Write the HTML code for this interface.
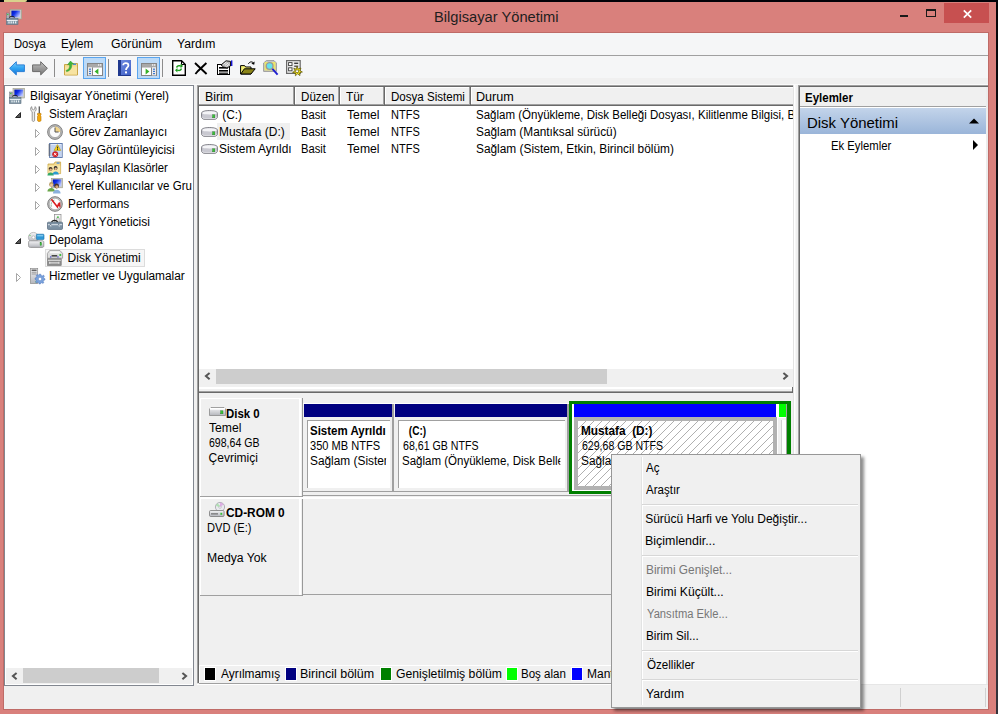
<!DOCTYPE html><html><head>
<meta charset="utf-8">
<title>Bilgisayar Yönetimi</title>
<style>
html,body{margin:0;padding:0;}
body{width:998px;height:714px;overflow:hidden;position:relative;background:linear-gradient(#050508,#34343c);font-family:"Liberation Sans",sans-serif;font-size:12px;color:#000;}
.a{position:absolute;}
.t{position:absolute;white-space:pre;line-height:16px;height:16px;font-size:12px;}
.b{font-weight:bold;}
svg{position:absolute;overflow:visible;}
</style>
</head>
<body>
<!-- desktop remnants -->
<div class="a" style="left:0;top:0;width:998px;height:2px;background:#020208;"></div>
<div class="a" style="left:4px;top:0;width:23px;height:2px;background:#d9d28c;border-radius:0 0 8px 0;"></div>
<!-- window frame -->
<div class="a" id="frame" style="left:0;top:2px;width:995.5px;height:712px;background:#d9807c;"></div>
<div class="a" style="left:3px;top:32px;width:986px;height:678px;background:#bf6b67;"></div>
<!-- title -->
<div class="t" style="left: 433.71px; top: 7.2px; font-size: 14.9px; line-height: 20px; height: 20px; color: rgb(30, 30, 30); transform: scaleX(0.9856); transform-origin: 0px 0px;">Bilgisayar Yönetimi</div>
<!-- title icon -->
<svg style="left:6px;top:9px;" width="16" height="16" viewBox="0 0 16 16"><rect x="4" y="0.4" width="11.6" height="9.6" fill="#cfcfc0" stroke="#9a9a8a" stroke-width="0.6"></rect><rect x="5.4" y="1.6" width="8.8" height="6.8" fill="url(#gscr)"></rect><rect x="7.6" y="10" width="4.4" height="1.4" fill="#8a8a8a"></rect><rect x="0.6" y="4" width="2.6" height="6" fill="#a9b0b6" stroke="#6d747a" stroke-width="0.5"></rect><rect x="1.2" y="5" width="1.2" height="1" fill="#2ed02e"></rect><path d="M3.4 8.6 C4.4 6.8 7.6 6.8 8.6 8.6" fill="none" stroke="#222" stroke-width="1.1"></path><rect x="0.4" y="9.4" width="11.6" height="6.2" fill="#8197a6" stroke="#5d7080" stroke-width="0.6"></rect><rect x="0.8" y="11" width="10.8" height="1" fill="#e8eef2"></rect><rect x="2.4" y="12.4" width="1.2" height="2" fill="#e8eef2"></rect><rect x="4.6" y="12.4" width="1.2" height="2" fill="#e8eef2"></rect><rect x="6.8" y="12.4" width="1.2" height="2" fill="#e8eef2"></rect><rect x="9" y="12.4" width="1.2" height="2" fill="#e8eef2"></rect></svg>
<!-- caption buttons -->
<div class="a" style="left:900px;top:15px;width:8px;height:2px;background:#1a1a1a;"></div>
<div class="a" style="left:926px;top:9px;width:8px;height:5px;border:1px solid #1a1a1a;border-top-width:2px;"></div>
<div class="a" style="left:944px;top:3px;width:45px;height:20px;background:#c75050;"></div>
<svg style="left:962.5px;top:9.5px;" width="9" height="8" viewBox="0 0 9 8"><path d="M0.8 0.3 L8.2 7.7 M8.2 0.3 L0.8 7.7" stroke="#fff" stroke-width="1.7" fill="none"></path></svg>

<!-- client -->
<div class="a" id="client" style="left:4px;top:33px;width:984px;height:676px;background:#f0f0f0;"></div>
<!-- menu bar -->
<div class="a" style="left:4px;top:33px;width:984px;height:22px;background:#f5f6f7;"></div>
<div class="a" style="left:4px;top:55px;width:984px;height:1px;background:#a0a0a0;"></div>
<div class="t" style="left: 13.67px; top: 35.5px; transform: scaleX(0.9333); transform-origin: 0px 0px;">Dosya</div>
<div class="t" style="left: 61.43px; top: 35.5px; transform: scaleX(0.9656); transform-origin: 0px 0px;">Eylem</div>
<div class="t" style="left: 110.5px; top: 35.5px; transform: scaleX(1.0204); transform-origin: 0px 0px;">Görünüm</div>
<div class="t" style="left: 177px; top: 35.5px; transform: scaleX(1.0135); transform-origin: 0px 0px;">Yardım</div>
<!-- toolbar -->
<div class="a" style="left:4px;top:56px;width:984px;height:22px;background:#f5f6f7;"></div>

<!-- TOOLBAR CONTENT -->
<svg style="left:9px;top:61px;" width="16" height="15" viewBox="0 0 16 15"><defs><linearGradient id="gb" x1="0" y1="0" x2="0" y2="1"><stop offset="0" stop-color="#7fd0fb"></stop><stop offset="0.5" stop-color="#2fa3f2"></stop><stop offset="1" stop-color="#1673d6"></stop></linearGradient><linearGradient id="gg" x1="0" y1="0" x2="0" y2="1"><stop offset="0" stop-color="#c4c4c4"></stop><stop offset="0.5" stop-color="#9a9a9a"></stop><stop offset="1" stop-color="#7a7a7a"></stop></linearGradient></defs><path d="M0.6 7.3 L7.3 0.7 L7.3 3.9 L15.4 3.9 L15.4 10.6 L7.3 10.6 L7.3 13.9 Z" fill="url(#gb)" stroke="#2b7fd6" stroke-width="1" stroke-linejoin="round"></path></svg>
<svg style="left:32px;top:61px;" width="16" height="15" viewBox="0 0 16 15"><path d="M15.4 7.3 L8.7 0.7 L8.7 3.9 L0.6 3.9 L0.6 10.6 L8.7 10.6 L8.7 13.9 Z" fill="url(#gg)" stroke="#6b6b6b" stroke-width="1" stroke-linejoin="round"></path></svg>
<div class="a" style="left:54px;top:59px;width:1px;height:18px;background:#8c8c8c;"></div>
<!-- folder up -->
<svg style="left:64px;top:61px;" width="15" height="15" viewBox="0 0 15 15"><path d="M0.5 3.5 L5 3.5 L6 2.5 L13.5 2.5 L13.5 14 L0.5 14 Z" fill="#f3d98a" stroke="#c9a648" stroke-width="1"></path><rect x="1" y="5.5" width="12" height="8" fill="#f7e3a2"></rect><rect x="9" y="2.6" width="3" height="1.4" fill="#4a8fe0"></rect><path d="M2 9.5 C5 9 6 6 5.5 3.5 L3.5 3.8 L6.5 0 L9.5 3 L7.6 3.3 C8.2 7 6 10 2.6 10.6 Z" fill="#3fb53a" stroke="#2f9a2c" stroke-width="0.5"></path></svg>
<!-- toggled button 1 -->
<div class="a" style="left:83px;top:57px;width:21px;height:20px;background:#bcdaf7;border:1px solid #5aa5ee;"></div>
<svg style="left:87px;top:63px;" width="16" height="13" viewBox="0 0 16 13"><rect x="0.5" y="0.5" width="15" height="12" fill="#fff" stroke="#858585"></rect><rect x="1" y="1" width="14" height="2.4" fill="#a9a9a9"></rect><rect x="11" y="1.3" width="1.3" height="1.3" fill="#fff"></rect><rect x="13" y="1.3" width="1.3" height="1.3" fill="#fff"></rect><rect x="1" y="3.4" width="14" height="1" fill="#858585"></rect><rect x="1" y="4.4" width="4" height="8" fill="#ececec"></rect><rect x="5" y="4.4" width="1" height="8" fill="#858585"></rect><rect x="2" y="5.6" width="2" height="1.2" fill="#3a78d0"></rect><rect x="2" y="7.8" width="2" height="1.2" fill="#3a78d0"></rect><rect x="2" y="10" width="2" height="1.2" fill="#3a78d0"></rect><path d="M7.6 8.4 L11.4 5.4 L11.4 11.4 Z" fill="#35b027"></path></svg>
<div class="a" style="left:108px;top:59px;width:1px;height:18px;background:#8c8c8c;"></div>
<!-- help -->
<svg style="left:118px;top:60px;" width="13" height="16" viewBox="0 0 13 16"><defs><linearGradient id="gh" x1="0" y1="0" x2="1" y2="1"><stop offset="0" stop-color="#7590e4"></stop><stop offset="1" stop-color="#3a5cc4"></stop></linearGradient></defs><rect width="13" height="16" fill="url(#gh)"></rect><rect width="3" height="16" fill="#20398f"></rect><rect x="0" y="15" width="13" height="1" fill="#20398f"></rect><path d="M5.2 5.2 C5.2 2.4 10.4 2.4 10.4 5.4 C10.4 7.4 8 7.6 8 10" fill="none" stroke="#fff" stroke-width="1.8"></path><rect x="7" y="11.4" width="2" height="2" fill="#fff"></rect></svg>
<!-- toggled button 2 -->
<div class="a" style="left:137px;top:57px;width:21px;height:20px;background:#bcdaf7;border:1px solid #5aa5ee;"></div>
<svg style="left:141px;top:63px;" width="16" height="13" viewBox="0 0 16 13"><rect x="0.5" y="0.5" width="15" height="12" fill="#fff" stroke="#858585"></rect><rect x="1" y="1" width="14" height="2.4" fill="#a9a9a9"></rect><rect x="11" y="1.3" width="1.3" height="1.3" fill="#fff"></rect><rect x="13" y="1.3" width="1.3" height="1.3" fill="#fff"></rect><rect x="1" y="3.4" width="14" height="1" fill="#858585"></rect><rect x="11" y="4.4" width="4" height="8" fill="#ececec"></rect><rect x="10" y="4.4" width="1" height="8" fill="#858585"></rect><rect x="12" y="5.6" width="2" height="1.2" fill="#3a78d0"></rect><rect x="12" y="7.8" width="2" height="1.2" fill="#3a78d0"></rect><rect x="12" y="10" width="2" height="1.2" fill="#3a78d0"></rect><path d="M8.4 8.4 L4.6 5.4 L4.6 11.4 Z" fill="#35b027"></path></svg>
<div class="a" style="left:162px;top:59px;width:1px;height:18px;background:#8c8c8c;"></div>
<!-- refresh -->
<svg style="left:172px;top:60px;" width="14" height="16" viewBox="0 0 14 16"><path d="M0.7 0.7 L9.5 0.7 L13.3 4.5 L13.3 15.3 L0.7 15.3 Z" fill="#fff" stroke="#000" stroke-width="1.4"></path><path d="M9.5 0.7 L9.5 4.5 L13.3 4.5" fill="none" stroke="#000" stroke-width="1"></path><path d="M4 7.5 C4 5 7 4.4 8.6 5.4 L8.6 3.6 L11 6 L8.6 8.2 L8.6 6.8 C7.4 6.2 5.6 6.6 5.4 7.8 Z" fill="#1da01d"></path><path d="M10 8.6 C10 11 7 11.8 5.4 10.8 L5.4 12.6 L3 10.2 L5.4 8 L5.4 9.4 C6.6 10 8.4 9.6 8.6 8.4 Z" fill="#1da01d"></path></svg>
<!-- delete X -->
<svg style="left:194px;top:62px;" width="14" height="13" viewBox="0 0 14 13"><path d="M1 1 L12.6 12 M12.4 1 L4 9 L1.4 12" stroke="#000" stroke-width="1.9" fill="none"></path></svg>
<!-- properties -->
<svg style="left:217px;top:60px;" width="16" height="15" viewBox="0 0 16 15"><rect x="0.5" y="4.5" width="12" height="10" fill="#fff" stroke="#000"></rect><rect x="2" y="7" width="9" height="1.6" fill="#000"></rect><rect x="2" y="10" width="9" height="1.6" fill="#000"></rect><rect x="2" y="12.6" width="9" height="1.2" fill="#000"></rect><path d="M4 5 L9 0.8 L13.5 1.4 L13.5 6 L10 8 L6.5 7 Z" fill="#b9b9b9" stroke="#000" stroke-width="0.9"></path><path d="M6.5 4.4 L9.4 2 M8 5.4 L11 3 M9.6 6.4 L12.4 4" stroke="#fff" stroke-width="0.8"></path><rect x="14" y="0.4" width="1.4" height="5.6" fill="#1515d8"></rect></svg>
<!-- open folder -->
<svg style="left:240px;top:60px;" width="16" height="15" viewBox="0 0 16 15"><path d="M0.6 5.6 L0.6 14 L11 14 L11 7 L5.6 7 L4.6 5.6 Z" fill="#f3ef73" stroke="#000" stroke-width="1"></path><path d="M0.8 14 L4.4 8.8 L15.2 8.8 L11 14 Z" fill="#8a8418" stroke="#000" stroke-width="1"></path><path d="M8.4 3.8 C9.8 1.4 12.4 1.2 13.6 3.4" fill="none" stroke="#000" stroke-width="1"></path><path d="M14.6 1.6 L14.2 4.8 L11.4 3.8 Z" fill="#000"></path></svg>
<!-- magnifier -->
<svg style="left:263px;top:60px;" width="16" height="16" viewBox="0 0 16 16"><path d="M0.6 3 L3.4 0.6 L11 0.6 L13.4 3 L13.4 11.4 L0.6 11.4 Z" fill="#c9c9c9" stroke="#8d8d8d" stroke-width="0.8"></path><rect x="1.6" y="2" width="10.8" height="8.4" fill="#ece667"></rect><circle cx="6.6" cy="6" r="3.4" fill="#63e3ee" stroke="#9a9a9a" stroke-width="1.3"></circle><path d="M9.4 8.8 L14.6 14.6" stroke="#1f1fd0" stroke-width="1.9"></path></svg>
<!-- settings grid -->
<svg style="left:286px;top:60px;" width="17" height="16" viewBox="0 0 17 16"><rect x="0.6" y="0.6" width="13.6" height="12.8" fill="#ececec" stroke="#6a6a6a" stroke-width="1.2"></rect><rect x="2.6" y="2.6" width="3.4" height="3" fill="#fff" stroke="#3c3c3c" stroke-width="0.9"></rect><rect x="8.2" y="2.6" width="4" height="1.4" fill="#3c3c3c"></rect><rect x="2.6" y="7.8" width="3.4" height="3" fill="#fff" stroke="#3c3c3c" stroke-width="0.9"></rect><rect x="8.2" y="5.6" width="4" height="1.2" fill="#3c3c3c"></rect><path d="M11 6.4 L12.2 9 L15 8 L13.8 10.6 L16.4 12 L13.6 12.8 L14 15.6 L11.6 13.8 L9.4 15.8 L9.4 13 L6.6 12.4 L9 10.8 L7.8 8.2 L10.2 9.2 Z" fill="#f5e61e" stroke="#5a5200" stroke-width="0.7"></path><rect x="9.8" y="10" width="2.6" height="2.4" fill="#fff" stroke="#5a5200" stroke-width="0.6"></rect></svg>
<!-- /TOOLBAR CONTENT -->


<div class="a" style="left:4px;top:84px;width:984px;height:1px;background:#fafafa;"></div>
<!-- tree panel -->
<div class="a" id="tree" style="left:4px;top:85px;width:188px;height:599px;background:#fff;border:1px solid #828790;"></div>


<!-- TREE CONTENT -->
<div class="a" style="left:45px;top:249px;width:100px;height:18px;background:#f6f6f6;border:1px solid #dcdcdc;box-sizing:border-box;"></div>
<div class="t" style="left: 29.51px; top: 87.7px; transform: scaleX(0.992); transform-origin: 0px 0px;">Bilgisayar Yönetimi (Yerel)</div>
<div class="t" style="left: 48.63px; top: 105.7px; transform: scaleX(0.9747); transform-origin: 0px 0px;">Sistem Araçları</div>
<div class="t" style="left: 68.6px; top: 123.7px; transform: scaleX(0.968); transform-origin: 0px 0px;">Görev Zamanlayıcı</div>
<div class="t" style="left: 68.6px; top: 141.7px; transform: scaleX(0.9906); transform-origin: 0px 0px;">Olay Görüntüleyicisi</div>
<div class="t" style="left: 68.16px; top: 159.7px; transform: scaleX(0.9419); transform-origin: 0px 0px;">Paylaşılan Klasörler</div>
<div class="t" style="left: 68px; top: 177.7px; width: 129.05px; overflow: hidden; transform: scaleX(0.9609); transform-origin: 0px 0px;">Yerel Kullanıcılar ve Gruplar</div>
<div class="t" style="left: 67.61px; top: 195.7px; transform: scaleX(0.9869); transform-origin: 0px 0px;">Performans</div>
<div class="t" style="left: 68.3px; top: 213.7px; transform: scaleX(1.0049); transform-origin: 0px 0px;">Aygıt Yöneticisi</div>
<div class="t" style="left: 48.62px; top: 231.7px; transform: scaleX(0.9833); transform-origin: 0px 0px;">Depolama</div>
<div class="t" style="left: 67.6px; top: 249.7px;">Disk Yönetimi</div>
<div class="t" style="left: 48.61px; top: 267.7px; transform: scaleX(0.9883); transform-origin: 0px 0px;">Hizmetler ve Uygulamalar</div>
<!-- tree icons -->
<svg width="0" height="0" style="left:0;top:0;"><defs><linearGradient id="gscr" x1="0" y1="0" x2="1" y2="0.6"><stop offset="0" stop-color="#0010b0"></stop><stop offset="0.45" stop-color="#1030e8"></stop><stop offset="1" stop-color="#b8c4ff"></stop></linearGradient><linearGradient id="gsil" x1="0" y1="0" x2="0" y2="1"><stop offset="0" stop-color="#f4f4f6"></stop><stop offset="1" stop-color="#b4b6bc"></stop></linearGradient></defs></svg><svg style="left:9px;top:88px;" width="16" height="16" viewBox="0 0 16 16"><rect x="4" y="0.4" width="11.6" height="9.6" fill="#cfcfc0" stroke="#9a9a8a" stroke-width="0.6"></rect><rect x="5.4" y="1.6" width="8.8" height="6.8" fill="url(#gscr)"></rect><rect x="7.6" y="10" width="4.4" height="1.4" fill="#8a8a8a"></rect><rect x="0.6" y="4" width="2.6" height="6" fill="#a9b0b6" stroke="#6d747a" stroke-width="0.5"></rect><rect x="1.2" y="5" width="1.2" height="1" fill="#2ed02e"></rect><path d="M3.4 8.6 C4.4 6.8 7.6 6.8 8.6 8.6" fill="none" stroke="#222" stroke-width="1.1"></path><rect x="0.4" y="9.4" width="11.6" height="6.2" fill="#8197a6" stroke="#5d7080" stroke-width="0.6"></rect><rect x="0.8" y="11" width="10.8" height="1" fill="#e8eef2"></rect><rect x="2.4" y="12.4" width="1.2" height="2" fill="#e8eef2"></rect><rect x="4.6" y="12.4" width="1.2" height="2" fill="#e8eef2"></rect><rect x="6.8" y="12.4" width="1.2" height="2" fill="#e8eef2"></rect><rect x="9" y="12.4" width="1.2" height="2" fill="#e8eef2"></rect></svg><svg style="left:30px;top:106px;" width="12" height="16" viewBox="0 0 12 16"><path d="M1.6 0.6 C0 2.2 0.4 4.8 2.2 5.8 L2.2 14.4 C2.2 15.7 4.6 15.7 4.6 14.4 L4.6 5.8 C6.4 4.8 6.8 2.2 5.2 0.6 L4.6 3.2 L3.4 3.8 L2.2 3.2 Z" fill="#ececec" stroke="#808080" stroke-width="0.8"></path><rect x="8.7" y="0.4" width="1.1" height="7.2" fill="#3a3a3a"></rect><path d="M7.5 7.4 L11 7.4 L11 9 L10.4 9.6 L11 10.2 L11 14.4 C11 15.8 7.5 15.8 7.5 14.4 L7.5 10.2 L8.1 9.6 L7.5 9 Z" fill="#f5a90e" stroke="#b87400" stroke-width="0.6"></path></svg><svg style="left:47px;top:124px;" width="16" height="16" viewBox="0 0 16 16"><circle cx="8" cy="8" r="7.4" fill="#b9b9b9" stroke="#7a7a7a" stroke-width="0.9"></circle><circle cx="8" cy="8" r="5.6" fill="#fbfbfb" stroke="#8c8c8c" stroke-width="0.6"></circle><path d="M8 8 L8 2.6 A5.4 5.4 0 0 1 13.4 8 Z" fill="#f1d48a"></path><path d="M8 3.6 L8 8 L11.6 8" fill="none" stroke="#555" stroke-width="1"></path></svg><svg style="left:48px;top:143px;" width="15" height="15" viewBox="0 0 15 15"><rect x="1.6" y="0.5" width="12.6" height="14" fill="#e4ecfa" stroke="#5572a8" stroke-width="0.9"></rect><path d="M3 3 H13 M3 5 H13 M3 7 H13 M3 9 H13 M3 11 H13 M3 13 H13" stroke="#8fb0e4" stroke-width="0.8"></path><path d="M0.4 2 H2.6 M0.4 4 H2.6 M0.4 6 H2.6 M0.4 8 H2.6 M0.4 10 H2.6 M0.4 12 H2.6" stroke="#555" stroke-width="0.9"></path><path d="M9.4 1.6 L12.8 7.4 L6 7.4 Z" fill="#f7d21e" stroke="#a88a00" stroke-width="0.5"></path><rect x="9" y="3.6" width="0.9" height="2" fill="#222"></rect><rect x="9" y="6" width="0.9" height="0.8" fill="#222"></rect><circle cx="7.2" cy="11.2" r="2.7" fill="#e0262c" stroke="#a01016" stroke-width="0.5"></circle><path d="M6 10 L8.4 12.4 M8.4 10 L6 12.4" stroke="#fff" stroke-width="0.9"></path></svg><svg style="left:47px;top:161px;" width="16" height="15" viewBox="0 0 16 15"><path d="M1 3 L7 3 L8 1 L13.6 1 L13.6 12.6 L1 12.6 Z" fill="#f2d98c" stroke="#c9a648" stroke-width="0.8"></path><rect x="1.4" y="4.6" width="11.8" height="7.6" fill="#f8e6a8"></rect><rect x="9.6" y="1.4" width="3" height="1.3" fill="#4a8fe0"></rect><circle cx="3.6" cy="7.8" r="1.9" fill="#3a2c20"></circle><path d="M0.4 14.4 C0.4 10.4 6.8 10.4 6.8 14.4 Z" fill="#35a86a"></path><circle cx="3.7" cy="8.6" r="1.2" fill="#e9b98a"></circle><circle cx="8.6" cy="7" r="1.9" fill="#2a2a2a"></circle><path d="M5.6 13.6 C5.6 9.6 11.8 9.6 11.8 13.6 Z" fill="#2a9ad0"></path><circle cx="8.7" cy="7.8" r="1.2" fill="#e9b98a"></circle></svg><svg style="left:47px;top:178px;" width="16" height="16" viewBox="0 0 16 16"><rect x="4.6" y="0.4" width="11" height="9.4" fill="#cfcfc0" stroke="#9a9a8a" stroke-width="0.6"></rect><rect x="5.8" y="1.4" width="8.6" height="7" fill="url(#gscr)"></rect><circle cx="4.4" cy="6.4" r="2.3" fill="#b79a62"></circle><circle cx="4.5" cy="7" r="1.5" fill="#ecc79c"></circle><path d="M0.4 13.6 C0.4 8.8 8 8.8 8 13.6 Z" fill="#6aa64a"></path><circle cx="9.6" cy="8" r="2.4" fill="#4a3626"></circle><circle cx="9.8" cy="8.8" r="1.5" fill="#d8a67a"></circle><path d="M6 15.6 C6 10.6 13.6 10.6 13.6 15.6 Z" fill="#8ab0dc"></path></svg><svg style="left:47px;top:196px;" width="16" height="16" viewBox="0 0 16 16"><circle cx="8" cy="8" r="7.3" fill="#c4c4c4" stroke="#6e6e6e" stroke-width="0.9"></circle><circle cx="8" cy="8" r="5.7" fill="#fff" stroke="#8c8c8c" stroke-width="0.5"></circle><path d="M4.4 10.4 C3.4 7 5.6 4.2 8 4" fill="none" stroke="#3a8a5a" stroke-width="0.9" stroke-dasharray="1 1"></path><path d="M4.4 3.2 L10.4 11 L11.4 8.4 L12.6 9.6 L12.4 6.4" fill="none" stroke="#d81e1e" stroke-width="1.6" stroke-linejoin="miter"></path></svg><svg style="left:47px;top:214px;" width="16" height="16" viewBox="0 0 16 16"><rect x="7.4" y="0.5" width="6.6" height="7.6" fill="#f4f4f4" stroke="#8a8a8a" stroke-width="0.7"></rect><rect x="10" y="2.4" width="1.8" height="1.6" fill="#4cc24c"></rect><rect x="9.4" y="4" width="3" height="4" fill="#e0e0e0" stroke="#9a9a9a" stroke-width="0.4"></rect><path d="M4.6 8.4 C5 5.6 10.2 5.6 10.6 8.4" fill="none" stroke="#222" stroke-width="1.2"></path><rect x="0.5" y="8.2" width="15" height="7.2" rx="0.8" fill="#7d92a4" stroke="#52667a" stroke-width="0.7"></rect><rect x="0.9" y="10.2" width="14.2" height="1" fill="#dfe7ee"></rect><rect x="3" y="10" width="1.4" height="2.6" fill="#e8eef2" stroke="#52667a" stroke-width="0.3"></rect><rect x="11.4" y="10" width="1.4" height="2.6" fill="#e8eef2" stroke="#52667a" stroke-width="0.3"></rect></svg><svg style="left:28px;top:232px;" width="17" height="16" viewBox="0 0 17 16"><circle cx="5.4" cy="5.4" r="5" fill="url(#gsil)" stroke="#9a9a9a" stroke-width="0.6"></circle><circle cx="5.4" cy="5.4" r="1.5" fill="#fff" stroke="#9a9a9a" stroke-width="0.5"></circle><circle cx="2" cy="3.4" r="0.7" fill="#6cd06c"></circle><rect x="8.4" y="2.2" width="7.6" height="5.4" rx="0.8" fill="#2f98d6" stroke="#1a6fa8" stroke-width="0.6"></rect><rect x="9.2" y="3" width="6" height="1.4" fill="#7cc6ee"></rect><path d="M0.6 10.2 C0.6 9 1.4 8.8 2.4 8.8 L14 8.8 C15.2 8.8 15.8 9.2 15.8 10.2 L15.8 13.8 C15.8 15 15.2 15.4 14 15.4 L2.4 15.4 C1.2 15.4 0.6 15 0.6 13.8 Z" fill="url(#gsil)" stroke="#808080" stroke-width="0.7"></path><rect x="12" y="10.4" width="1.6" height="3" fill="#3fbf3f" stroke="#2a7a2a" stroke-width="0.3"></rect></svg><svg style="left:47px;top:250px;" width="16" height="16" viewBox="0 0 16 16"><path d="M2.6 0.6 L13 0.6 L15.6 3.4 L15.6 8.2 L0.4 8.2 L0.4 3.4 Z" fill="#dedede" stroke="#8a8a8a" stroke-width="0.7"></path><rect x="2.8" y="1.3" width="10" height="2" fill="#f8f8f8"></rect><rect x="12.4" y="4" width="1.8" height="2" fill="#3fbf3f"></rect><rect x="4.6" y="5.2" width="5.6" height="1.3" fill="#222"></rect><rect x="3.2" y="6.4" width="1.1" height="1.1" fill="#1a1ad0"></rect><rect x="10.4" y="6.4" width="1.1" height="1.1" fill="#1a1ad0"></rect><rect x="0.6" y="8.8" width="13.6" height="6.6" fill="#8c8c8c" stroke="#6a6a6a" stroke-width="0.6"></rect><rect x="1" y="9.8" width="12.8" height="0.9" fill="#f0f0f0"></rect><rect x="3" y="12.4" width="8.6" height="1" fill="#f0f0f0"></rect><rect x="2.2" y="11.8" width="1" height="2" fill="#f0f0f0"></rect><rect x="11.4" y="11.8" width="1" height="2" fill="#f0f0f0"></rect></svg><svg style="left:30px;top:268px;" width="15" height="16" viewBox="0 0 15 16"><rect x="0.5" y="0.5" width="7.2" height="15" fill="url(#gsil)" stroke="#8a8a8a" stroke-width="0.7"></rect><rect x="1.6" y="1.6" width="5" height="1.2" fill="#444"></rect><rect x="1.6" y="3.8" width="5" height="0.8" fill="#8a8a8a"></rect><rect x="1.6" y="5.6" width="5" height="0.8" fill="#8a8a8a"></rect><rect x="5.4" y="13.4" width="1.4" height="1" fill="#3fbf3f"></rect><g transform="translate(10,11)"><path d="M-0.8 -4.8 L0.8 -4.8 L1.1 -3.5 L2.3 -3 L3.4 -3.9 L4.4 -2.8 L3.6 -1.7 L4 -0.6 L4.9 -0.3 L4.9 1 L3.7 1.3 L3.2 2.4 L3.9 3.5 L2.9 4.4 L1.8 3.7 L0.7 4.1 L0.4 4.9 L-1 4.9 L-1.3 3.7 L-2.4 3.2 L-3.5 3.9 L-4.4 2.9 L-3.7 1.8 L-4.1 0.7 L-4.9 0.4 L-4.9 -1 L-3.7 -1.3 L-3.2 -2.4 L-3.9 -3.5 L-2.9 -4.4 L-1.8 -3.7 Z" fill="#7aa2dc" stroke="#4a72b8" stroke-width="0.5"></path><circle r="1.7" fill="#fff" stroke="#4a72b8" stroke-width="0.4"></circle></g></svg>
<!-- expanders -->
<svg style="left:15.2px;top:111.8px;" width="6" height="6" viewBox="0 0 6 6"><path d="M5.5 0.6 L5.5 5.5 L0.6 5.5 Z" fill="#595959" stroke="#262626" stroke-width="1"></path></svg>
<svg style="left:15.2px;top:238px;" width="6" height="6" viewBox="0 0 6 6"><path d="M5.5 0.6 L5.5 5.5 L0.6 5.5 Z" fill="#595959" stroke="#262626" stroke-width="1"></path></svg>
<svg style="left:35px;top:129px;" width="6" height="9" viewBox="0 0 6 9"><path d="M0.5 0.5 L4.5 4.5 L0.5 8.5 Z" fill="#fff" stroke="#a6a6a6" stroke-width="1"></path></svg>
<svg style="left:35px;top:147px;" width="6" height="9" viewBox="0 0 6 9"><path d="M0.5 0.5 L4.5 4.5 L0.5 8.5 Z" fill="#fff" stroke="#a6a6a6" stroke-width="1"></path></svg>
<svg style="left:35px;top:165px;" width="6" height="9" viewBox="0 0 6 9"><path d="M0.5 0.5 L4.5 4.5 L0.5 8.5 Z" fill="#fff" stroke="#a6a6a6" stroke-width="1"></path></svg>
<svg style="left:35px;top:183px;" width="6" height="9" viewBox="0 0 6 9"><path d="M0.5 0.5 L4.5 4.5 L0.5 8.5 Z" fill="#fff" stroke="#a6a6a6" stroke-width="1"></path></svg>
<svg style="left:35px;top:201px;" width="6" height="9" viewBox="0 0 6 9"><path d="M0.5 0.5 L4.5 4.5 L0.5 8.5 Z" fill="#fff" stroke="#a6a6a6" stroke-width="1"></path></svg>
<svg style="left:16px;top:273px;" width="6" height="9" viewBox="0 0 6 9"><path d="M0.5 0.5 L4.5 4.5 L0.5 8.5 Z" fill="#fff" stroke="#a6a6a6" stroke-width="1"></path></svg>
<!-- tree scrollbar -->
<div class="a" style="left:6px;top:668px;width:186px;height:16px;background:#f0f0f0;"></div>
<div class="a" style="left:23px;top:668px;width:136px;height:15px;background:#cdcdcd;"></div>
<svg style="left:10.5px;top:671.5px;" width="7" height="9" viewBox="0 0 7 9"><path d="M5.6 0.9 L1.9 4.1 L5.6 7.3" fill="none" stroke="#555" stroke-width="2"></path></svg>
<svg style="left:180.5px;top:671.5px;" width="7" height="9" viewBox="0 0 7 9"><path d="M1.4 0.9 L5.1 4.1 L1.4 7.3" fill="none" stroke="#555" stroke-width="2"></path></svg>
<!-- /TREE CONTENT -->

<!-- center panel -->
<div class="a" id="center" style="left:197px;top:85px;width:598px;height:600px;background:#f0f0f0;"></div>


<!-- CENTER CONTENT -->
<div class="a" style="left:197px;top:85px;width:598px;height:600px;background:#fff;"></div>
<div class="a" style="left:197px;top:85px;width:597px;height:599px;background:#e3e3e3;"></div>
<div class="a" style="left:197px;top:85px;width:596px;height:598px;background:#a0a0a0;"></div>
<div class="a" style="left:198px;top:86px;width:595px;height:597px;background:#696969;"></div>
<div class="a" style="left:199px;top:87px;width:594px;height:596px;background:#f0f0f0;"></div>
<!-- list -->
<div class="a" style="left:199px;top:106px;width:594px;height:263px;background:#fff;"></div>
<div class="a" style="left:199px;top:87px;width:96px;height:19px;background:#696969;"></div><div class="a" style="left:199px;top:87px;width:95px;height:18px;background:#a0a0a0;"></div><div class="a" style="left:199px;top:87px;width:94px;height:17px;background:#fff;"></div><div class="a" style="left:200px;top:88px;width:93px;height:16px;background:#f0f0f0;"></div><div class="t" style="left: 204.67px; top: 88.6px; transform: scaleX(1.0308); transform-origin: 0px 0px;">Birim</div>
<div class="a" style="left:295px;top:87px;width:45px;height:19px;background:#696969;"></div><div class="a" style="left:295px;top:87px;width:44px;height:18px;background:#a0a0a0;"></div><div class="a" style="left:295px;top:87px;width:43px;height:17px;background:#fff;"></div><div class="a" style="left:296px;top:88px;width:42px;height:16px;background:#f0f0f0;"></div><div class="t" style="left: 300.63px; top: 88.6px; transform: scaleX(0.9667); transform-origin: 0px 0px;">Düzen</div>
<div class="a" style="left:340px;top:87px;width:45px;height:19px;background:#696969;"></div><div class="a" style="left:340px;top:87px;width:44px;height:18px;background:#a0a0a0;"></div><div class="a" style="left:340px;top:87px;width:43px;height:17px;background:#fff;"></div><div class="a" style="left:341px;top:88px;width:42px;height:16px;background:#f0f0f0;"></div><div class="t" style="left: 346.4px; top: 88.6px; transform: scaleX(0.9889); transform-origin: 0px 0px;">Tür</div>
<div class="a" style="left:385px;top:87px;width:86px;height:19px;background:#696969;"></div><div class="a" style="left:385px;top:87px;width:85px;height:18px;background:#a0a0a0;"></div><div class="a" style="left:385px;top:87px;width:84px;height:17px;background:#fff;"></div><div class="a" style="left:386px;top:88px;width:83px;height:16px;background:#f0f0f0;"></div><div class="t" style="left: 390.54px; top: 88.6px; transform: scaleX(0.964); transform-origin: 0px 0px;">Dosya Sistemi</div>
<div class="a" style="left:471px;top:87px;width:322px;height:19px;background:#696969;"></div><div class="a" style="left:471px;top:87px;width:322px;height:18px;background:#a0a0a0;"></div><div class="a" style="left:471px;top:87px;width:322px;height:17px;background:#fff;"></div><div class="a" style="left:472px;top:88px;width:321px;height:16px;background:#f0f0f0;"></div><div class="t" style="left: 475.55px; top: 88.6px; transform: scaleX(1.05); transform-origin: 0px 0px;">Durum</div>
<div class="a" style="left:217px;top:123px;width:73px;height:17px;background:#f0f0f0;"></div>
<div class="t" style="left: 218.5px; top: 106.5px; width: 73.31px; overflow: hidden; transform: scaleX(0.9889); transform-origin: 0px 0px;"> (C:)</div><div class="t" style="left: 300.67px; top: 106.5px; transform: scaleX(0.9346); transform-origin: 0px 0px;">Basit</div><div class="t" style="left: 347.3px; top: 106.5px; transform: scaleX(1.0161); transform-origin: 0px 0px;">Temel</div><div class="t" style="left: 390.58px; top: 106.5px; transform: scaleX(0.9167); transform-origin: 0px 0px;">NTFS</div><div class="t" style="left: 475.64px; top: 106.5px; width: 330.89px; overflow: hidden; transform: scaleX(0.9591); transform-origin: 0px 0px;">Sağlam (Önyükleme, Disk Belleği Dosyası, Kilitlenme Bilgisi, Birincil bölüm)</div>
<div class="t" style="left: 218.5px; top: 123.5px; width: 72.84px; overflow: hidden; transform: scaleX(0.9953); transform-origin: 0px 0px;">Mustafa (D:)</div><div class="t" style="left: 300.67px; top: 123.5px; transform: scaleX(0.9346); transform-origin: 0px 0px;">Basit</div><div class="t" style="left: 347.3px; top: 123.5px; transform: scaleX(1.0161); transform-origin: 0px 0px;">Temel</div><div class="t" style="left: 390.58px; top: 123.5px; transform: scaleX(0.9167); transform-origin: 0px 0px;">NTFS</div><div class="t" style="left: 475.61px; top: 123.5px; width: 322.19px; overflow: hidden; transform: scaleX(0.9851); transform-origin: 0px 0px;">Sağlam (Mantıksal sürücü)</div>
<div class="t" style="left: 218.51px; top: 140.5px; width: 73px; overflow: hidden; transform: scaleX(0.993); transform-origin: 0px 0px;">Sistem Ayrıldı</div><div class="t" style="left: 300.67px; top: 140.5px; transform: scaleX(0.9346); transform-origin: 0px 0px;">Basit</div><div class="t" style="left: 347.3px; top: 140.5px; transform: scaleX(1.0161); transform-origin: 0px 0px;">Temel</div><div class="t" style="left: 390.58px; top: 140.5px; transform: scaleX(0.9167); transform-origin: 0px 0px;">NTFS</div><div class="t" style="left: 475.61px; top: 140.5px; width: 320.95px; overflow: hidden; transform: scaleX(0.9889); transform-origin: 0px 0px;">Sağlam (Sistem, Etkin, Birincil bölüm)</div>
<!-- drive icons -->
<svg style="left:200.8px;top:110px;" width="17" height="10" viewBox="0 0 17 10"><path d="M0.6 3.2 C0.6 1.6 3.5 0.6 8.5 0.6 C13.5 0.6 16.4 1.6 16.4 3.2 L16.4 6.8 C16.4 8.4 14.8 9.4 13 9.4 L4 9.4 C2.2 9.4 0.6 8.4 0.6 6.8 Z" fill="#c9c9d1" stroke="#6e6e76" stroke-width="0.9"></path><path d="M1.3 3.2 C1.3 2 4 1.3 8.5 1.3 C13 1.3 15.7 2 15.7 3.2 C15.7 4 13 4.4 8.5 4.4 C4 4.4 1.3 4 1.3 3.2 Z" fill="#f4f4f7"></path><path d="M1.3 7 C2 8.4 3 8.7 4 8.7 L13 8.7 C14 8.7 15 8.4 15.7 7" fill="none" stroke="#e6e6ea" stroke-width="0.8"></path><rect x="11.6" y="4.8" width="2.2" height="3" fill="#35c435" stroke="#2a7a2a" stroke-width="0.4"></rect></svg>
<svg style="left:200.8px;top:127px;" width="17" height="10" viewBox="0 0 17 10"><path d="M0.6 3.2 C0.6 1.6 3.5 0.6 8.5 0.6 C13.5 0.6 16.4 1.6 16.4 3.2 L16.4 6.8 C16.4 8.4 14.8 9.4 13 9.4 L4 9.4 C2.2 9.4 0.6 8.4 0.6 6.8 Z" fill="#c9c9d1" stroke="#6e6e76" stroke-width="0.9"></path><path d="M1.3 3.2 C1.3 2 4 1.3 8.5 1.3 C13 1.3 15.7 2 15.7 3.2 C15.7 4 13 4.4 8.5 4.4 C4 4.4 1.3 4 1.3 3.2 Z" fill="#f4f4f7"></path><path d="M1.3 7 C2 8.4 3 8.7 4 8.7 L13 8.7 C14 8.7 15 8.4 15.7 7" fill="none" stroke="#e6e6ea" stroke-width="0.8"></path><rect x="11.6" y="4.8" width="2.2" height="3" fill="#35c435" stroke="#2a7a2a" stroke-width="0.4"></rect></svg>
<svg style="left:200.8px;top:144px;" width="17" height="10" viewBox="0 0 17 10"><path d="M0.6 3.2 C0.6 1.6 3.5 0.6 8.5 0.6 C13.5 0.6 16.4 1.6 16.4 3.2 L16.4 6.8 C16.4 8.4 14.8 9.4 13 9.4 L4 9.4 C2.2 9.4 0.6 8.4 0.6 6.8 Z" fill="#c9c9d1" stroke="#6e6e76" stroke-width="0.9"></path><path d="M1.3 3.2 C1.3 2 4 1.3 8.5 1.3 C13 1.3 15.7 2 15.7 3.2 C15.7 4 13 4.4 8.5 4.4 C4 4.4 1.3 4 1.3 3.2 Z" fill="#f4f4f7"></path><path d="M1.3 7 C2 8.4 3 8.7 4 8.7 L13 8.7 C14 8.7 15 8.4 15.7 7" fill="none" stroke="#e6e6ea" stroke-width="0.8"></path><rect x="11.6" y="4.8" width="2.2" height="3" fill="#35c435" stroke="#2a7a2a" stroke-width="0.4"></rect></svg>
<!-- list scrollbar -->
<div class="a" style="left:199px;top:369px;width:594px;height:18px;background:#f0f0f0;"></div>
<div class="a" style="left:216px;top:369px;width:391px;height:15px;background:#cdcdcd;"></div>
<svg style="left:203.5px;top:372px;" width="7" height="9" viewBox="0 0 7 9"><path d="M5.6 0.9 L1.9 4.1 L5.6 7.3" fill="none" stroke="#555" stroke-width="2"></path></svg>
<svg style="left:781.5px;top:372px;" width="7" height="9" viewBox="0 0 7 9"><path d="M1.4 0.9 L5.1 4.1 L1.4 7.3" fill="none" stroke="#555" stroke-width="2"></path></svg>
<div class="a" style="left:793px;top:87px;width:1px;height:597px;background:#e3e3e3;"></div><div class="a" style="left:794px;top:85px;width:1px;height:600px;background:#fff;"></div><div class="a" style="left:795px;top:85px;width:1px;height:600px;background:#f7f7f7;"></div>
<!-- splitter -->
<div class="a" style="left:199px;top:387px;width:594px;height:2px;background:#fff;"></div>
<div class="a" style="left:199px;top:391px;width:594px;height:1px;background:#a0a0a0;"></div>
<div class="a" style="left:199px;top:392px;width:594px;height:1px;background:#696969;"></div>
<div class="a" style="left:792px;top:387px;width:1px;height:6px;background:#696969;"></div>
<!-- disk labels -->
<div class="a" style="left:200px;top:398px;width:101px;height:98px;background:#fff;"></div>
<div class="a" style="left:201px;top:399px;width:98px;height:97px;background:#f0f0f0;"></div>
<div class="a" style="left:200px;top:496px;width:102px;height:1px;background:#a0a0a0;"></div>
<div class="a" style="left:302px;top:398px;width:1px;height:100px;background:#999;"></div>
<div class="a" style="left:200px;top:497px;width:593px;height:2px;background:#fff;"></div>
<div class="a" style="left:200px;top:499px;width:101px;height:96px;background:#fff;"></div>
<div class="a" style="left:201px;top:499px;width:98px;height:96px;background:#f0f0f0;"></div>
<div class="a" style="left:200px;top:595px;width:103px;height:1px;background:#a0a0a0;"></div>
<div class="a" style="left:302px;top:499px;width:1px;height:97px;background:#999;"></div>
<div class="a" style="left:303px;top:594px;width:490px;height:1px;background:#a0a0a0;"></div>
<div class="a" style="left:303px;top:491px;width:490px;height:1px;background:#a0a0a0;"></div>
<div class="a" style="left:303px;top:495px;width:490px;height:1px;background:#a0a0a0;"></div>
<div class="a" style="left:303px;top:403px;width:266px;height:1px;background:#fff;"></div>
<div class="t b" style="left: 225.75px; top: 405.5px; transform: scaleX(0.9529); transform-origin: 0px 0px;">Disk 0</div>
<div class="t" style="left: 208.6px; top: 420px; transform: scaleX(1.0129); transform-origin: 0px 0px;">Temel</div>
<div class="t" style="left: 208.6px; top: 435px; transform: scaleX(0.8789); transform-origin: 0px 0px;">698,64 GB</div>
<div class="t" style="left: 208.6px; top: 450px;">Çevrimiçi</div>
<div class="t b" style="left: 226.4px; top: 504.5px; transform: scaleX(0.9898); transform-origin: 0px 0px;">CD-ROM 0</div>
<div class="t" style="left: 207.37px; top: 519.5px; transform: scaleX(0.9261); transform-origin: 0px 0px;">DVD (E:)</div>
<div class="t" style="left: 207.28px; top: 549.5px; transform: scaleX(1.0155); transform-origin: 0px 0px;">Medya Yok</div>
<svg style="left:209px;top:407px;" width="17" height="9" viewBox="0 0 17 9"><path d="M0.5 2 L2 0.5 L15 0.5 L16.5 2 L16.5 8.5 L0.5 8.5 Z" fill="url(#gsil)" stroke="#8a8a8a" stroke-width="0.8"></path><rect x="1" y="1" width="15" height="1.6" fill="#fff"></rect><rect x="11.6" y="3.8" width="2.4" height="3" fill="#35c435" stroke="#2a7a2a" stroke-width="0.4"></rect></svg>
<svg style="left:209px;top:502px;" width="17" height="15" viewBox="0 0 17 15"><circle cx="11" cy="5" r="4.6" fill="#e9e9ee" stroke="#9a9aa2" stroke-width="0.7"></circle><circle cx="11" cy="5" r="1.3" fill="#fff" stroke="#9a9aa2" stroke-width="0.5"></circle><path d="M11 0.6 A4.4 4.4 0 0 1 14.6 2.6 L11 5 Z" fill="#d9a0e0" opacity="0.8"></path><path d="M7 4 A4.4 4.4 0 0 1 9 1.2 L11 5 Z" fill="#9fe0a0" opacity="0.8"></path><rect x="0.5" y="8.5" width="14.6" height="6" rx="1.2" fill="url(#gsil)" stroke="#7a7a7a" stroke-width="0.8"></rect><rect x="2" y="11.4" width="7" height="1" fill="#5a5a5a"></rect><rect x="11.4" y="10.8" width="1.8" height="2" fill="#35c435"></rect></svg>
<!-- partition 1 -->
<div class="a" style="left:304px;top:404px;width:88px;height:13px;background:#000080;"></div>
<div class="a" style="left:392px;top:404px;width:2px;height:88px;background:#a0a0a0;"></div>
<div class="a" style="left:307px;top:420px;width:83px;height:68px;background:#a0a0a0;"></div>
<div class="a" style="left:308px;top:421px;width:82px;height:67px;background:#fff;"></div>
<div class="t b" style="left: 310.24px; top: 422.5px; width: 82.35px; overflow: hidden; transform: scaleX(0.9564); transform-origin: 0px 0px;">Sistem Ayrıldı</div>
<div class="t" style="left: 310.28px; top: 437.5px; width: 85.31px; overflow: hidden; transform: scaleX(0.9227); transform-origin: 0px 0px;">350 MB NTFS</div>
<div class="t" style="left: 310.21px; top: 452.5px; width: 76.64px; overflow: hidden; transform: scaleX(0.9889); transform-origin: 0px 0px;">Sağlam (Sistem, Etkin, Birincil bölüm)</div>
<!-- partition 2 -->
<div class="a" style="left:395px;top:404px;width:172px;height:13px;background:#000080;"></div>
<div class="a" style="left:567px;top:404px;width:2px;height:88px;background:#a0a0a0;"></div>
<div class="a" style="left:398px;top:420px;width:167px;height:68px;background:#a0a0a0;"></div>
<div class="a" style="left:399px;top:421px;width:166px;height:67px;background:#fff;"></div>
<div class="t b" style="left: 405.99px; top: 422.5px; transform: scaleX(0.84); transform-origin: 0px 0px;"> (C:)</div>
<div class="t" style="left: 402.7px; top: 437.5px; transform: scaleX(0.8847); transform-origin: 0px 0px;">68,61 GB NTFS</div>
<div class="t" style="left: 401.74px; top: 452.5px; width: 165.44px; overflow: hidden; transform: scaleX(0.9596); transform-origin: 0px 0px;">Sağlam (Önyükleme, Disk Belleği Dosyası)</div>
<!-- partition 3 selected -->
<div class="a" style="left:569px;top:401px;width:222px;height:93px;background:#008000;"></div>
<div class="a" style="left:572px;top:404px;width:215px;height:87px;background:#fff;"></div>
<div class="a" style="left:574px;top:404px;width:202px;height:13px;background:#0000ff;"></div>
<div class="a" style="left:574px;top:417px;width:203px;height:73px;background:#b2b2b2;"></div>
<svg style="left:578px;top:421px;" width="195" height="65" viewBox="0 0 195 65"><defs><pattern id="hp" width="8" height="8" patternUnits="userSpaceOnUse"><rect width="8" height="8" fill="#fff"></rect><path d="M-1 9 L9 -1 M-1 1 L1 -1 M7 9 L9 7" stroke="#858585" stroke-width="0.65"></path></pattern></defs><rect width="195" height="65" fill="url(#hp)"></rect></svg>
<div class="a" style="left:779px;top:404px;width:7px;height:13px;background:#00ff00;"></div>
<div class="a" style="left:786px;top:404px;width:1px;height:87px;background:#a0a0a0;"></div>
<div class="a" style="left:778px;top:418px;width:8px;height:72px;background:#f0f0f0;"></div>
<div class="a" style="left:781px;top:420px;width:4px;height:68px;background:#fff;border-left:1px solid #d0d0d0;"></div>
<div class="t b" style="left: 581.02px; top: 422.5px; transform: scaleX(0.9831); transform-origin: 0px 0px;">Mustafa  (D:)</div>
<div class="t" style="left: 582px; top: 437.5px; transform: scaleX(0.8793); transform-origin: 0px 0px;">629,68 GB NTFS</div>
<div class="t" style="left: 581.01px; top: 452.5px; transform: scaleX(0.9851); transform-origin: 0px 0px;">Sağlam (Mantıksal sürücü)</div>
<!-- legend -->
<div class="a" style="left:199px;top:665px;width:594px;height:1px;background:#fff;"></div><div class="a" style="left:199px;top:665px;width:1px;height:18px;background:#fff;"></div><div class="a" style="left:199px;top:683px;width:594px;height:1px;background:#a0a0a0;"></div>
<div class="a" style="left:204px;top:667px;width:10px;height:12px;background:#000;border:1px solid #fff;"></div>
<div class="t" style="left: 220.6px; top: 665.5px; transform: scaleX(0.9917); transform-origin: 0px 0px;">Ayrılmamış</div>
<div class="a" style="left:285px;top:667px;width:10px;height:12px;background:#000080;border:1px solid #fff;"></div>
<div class="t" style="left: 300.46px; top: 665.5px; transform: scaleX(1.04); transform-origin: 0px 0px;">Birincil bölüm</div>
<div class="a" style="left:380px;top:667px;width:10px;height:12px;background:#008000;border:1px solid #fff;"></div>
<div class="t" style="left: 396.3px; top: 665.5px; transform: scaleX(1.0175); transform-origin: 0px 0px;">Genişletilmiş bölüm</div>
<div class="a" style="left:506px;top:667px;width:10px;height:12px;background:#00ff00;border:1px solid #fff;"></div>
<div class="t" style="left: 521.34px; top: 665.5px; transform: scaleX(0.9622); transform-origin: 0px 0px;">Boş alan</div>
<div class="a" style="left:571px;top:667px;width:10px;height:12px;background:#0000ff;border:1px solid #fff;"></div>
<div class="t" style="left:587px;top:665.5px;">Mantıksal sürücü</div>
<!-- /CENTER CONTENT -->

<!-- actions panel -->
<div class="a" id="actions" style="left:798px;top:85px;width:190px;height:600px;background:#fff;"></div>


<!-- ACTIONS CONTENT -->
<div class="a" style="left:798px;top:85px;width:190px;height:600px;background:#a0a0a0;"></div>
<div class="a" style="left:799px;top:86px;width:189px;height:599px;background:#696969;"></div>
<div class="a" style="left:800px;top:87px;width:188px;height:598px;background:#fff;"></div>
<div class="a" style="left:986px;top:87px;width:2px;height:598px;background:#ececec;"></div>
<div class="a" style="left:800px;top:87px;width:186px;height:19px;background:#f0f0f0;"></div>
<div class="a" style="left:800px;top:106px;width:186px;height:1px;background:#a0a0a0;"></div><div class="a" style="left:800px;top:107px;width:186px;height:1px;background:#fff;"></div>
<div class="t b" style="left: 804.64px; top: 89.5px; transform: scaleX(0.9571); transform-origin: 0px 0px;">Eylemler</div>
<div class="a" style="left:800px;top:108px;width:186px;height:26px;background:linear-gradient(#c3d4ea,#9ab5d9);"></div>
<div class="t" style="left: 806.6px; top: 112.5px; font-size: 15px; line-height: 20px; height: 20px; transform: scaleX(0.9956); transform-origin: 0px 0px;">Disk Yönetimi</div>
<svg style="left:969px;top:118px;" width="10" height="6" viewBox="0 0 10 6"><path d="M0 5.5 L5 0.5 L10 5.5 Z" fill="#000"></path></svg>
<div class="t" style="left: 831.06px; top: 137.5px; transform: scaleX(0.9413); transform-origin: 0px 0px;">Ek Eylemler</div>
<svg style="left:973px;top:140px;" width="5" height="10" viewBox="0 0 5 10"><path d="M0 0 L5 5 L0 10 Z" fill="#000"></path></svg>
<div class="a" style="left:800px;top:684px;width:188px;height:1px;background:#e6e6e6;"></div>
<!-- /ACTIONS CONTENT -->

<!-- status bar -->
<div class="a" style="left:4px;top:686px;width:984px;height:23px;background:#f0f0f0;"></div>



<div class="a" style="left:900px;top:688px;width:1px;height:19px;background:#d0d0d0;"></div>
<div class="a" style="left:985px;top:688px;width:1px;height:19px;background:#d0d0d0;"></div>

<!-- context menu -->
<div class="a" id="ctx" style="left:611px;top:454px;width:248px;height:252px;background:#f0f0f0;border:1px solid #979797;box-shadow:3px 3px 3px rgba(0,0,0,0.45);"></div>

<!-- CTX CONTENT -->
<div class="a" style="left:641px;top:457px;width:1px;height:248px;background:#e2e3e3;"></div>
<div class="a" style="left:642px;top:457px;width:1px;height:248px;background:#fff;"></div>
<div class="a" style="left:642px;top:504px;width:216px;height:1px;background:#d7d7d7;"></div><div class="a" style="left:642px;top:505px;width:216px;height:1px;background:#fff;"></div>
<div class="a" style="left:642px;top:555px;width:216px;height:1px;background:#d7d7d7;"></div><div class="a" style="left:642px;top:556px;width:216px;height:1px;background:#fff;"></div>
<div class="a" style="left:642px;top:650px;width:216px;height:1px;background:#d7d7d7;"></div><div class="a" style="left:642px;top:651px;width:216px;height:1px;background:#fff;"></div>
<div class="a" style="left:642px;top:679px;width:216px;height:1px;background:#d7d7d7;"></div><div class="a" style="left:642px;top:680px;width:216px;height:1px;background:#fff;"></div>
<div class="t" style="left: 646.2px; top: 459.5px; color: rgb(0, 0, 0); transform: scaleX(0.9643); transform-origin: 0px 0px;">Aç</div>
<div class="t" style="left: 646.2px; top: 481.5px; color: rgb(0, 0, 0); transform: scaleX(0.96); transform-origin: 0px 0px;">Araştır</div>
<div class="t" style="left: 645.2px; top: 510.5px; color: rgb(0, 0, 0);">Sürücü Harfi ve Yolu Değiştir...</div>
<div class="t" style="left: 645.16px; top: 532.5px; color: rgb(0, 0, 0); transform: scaleX(1.0364); transform-origin: 0px 0px;">Biçimlendir...</div>
<div class="t" style="left: 645.71px; top: 561.5px; color: rgb(119, 119, 119); transform: scaleX(0.9859); transform-origin: 0px 0px;">Birimi Genişlet...</div>
<div class="t" style="left: 645.69px; top: 583.5px; color: rgb(0, 0, 0); transform: scaleX(1.0133); transform-origin: 0px 0px;">Birimi Küçült...</div>
<div class="t" style="left: 647.1px; top: 605.5px; color: rgb(119, 119, 119); transform: scaleX(0.9337); transform-origin: 0px 0px;">Yansıtma Ekle...</div>
<div class="t" style="left: 645.72px; top: 627.5px; color: rgb(0, 0, 0); transform: scaleX(0.9769); transform-origin: 0px 0px;">Birim Sil...</div>
<div class="t" style="left: 646.6px; top: 656.5px; color: rgb(0, 0, 0); transform: scaleX(0.9673); transform-origin: 0px 0px;">Özellikler</div>
<div class="t" style="left: 646.2px; top: 685.5px; color: rgb(0, 0, 0); transform: scaleX(1.0081); transform-origin: 0px 0px;">Yardım</div>
<!-- /CTX CONTENT -->


</body></html>
